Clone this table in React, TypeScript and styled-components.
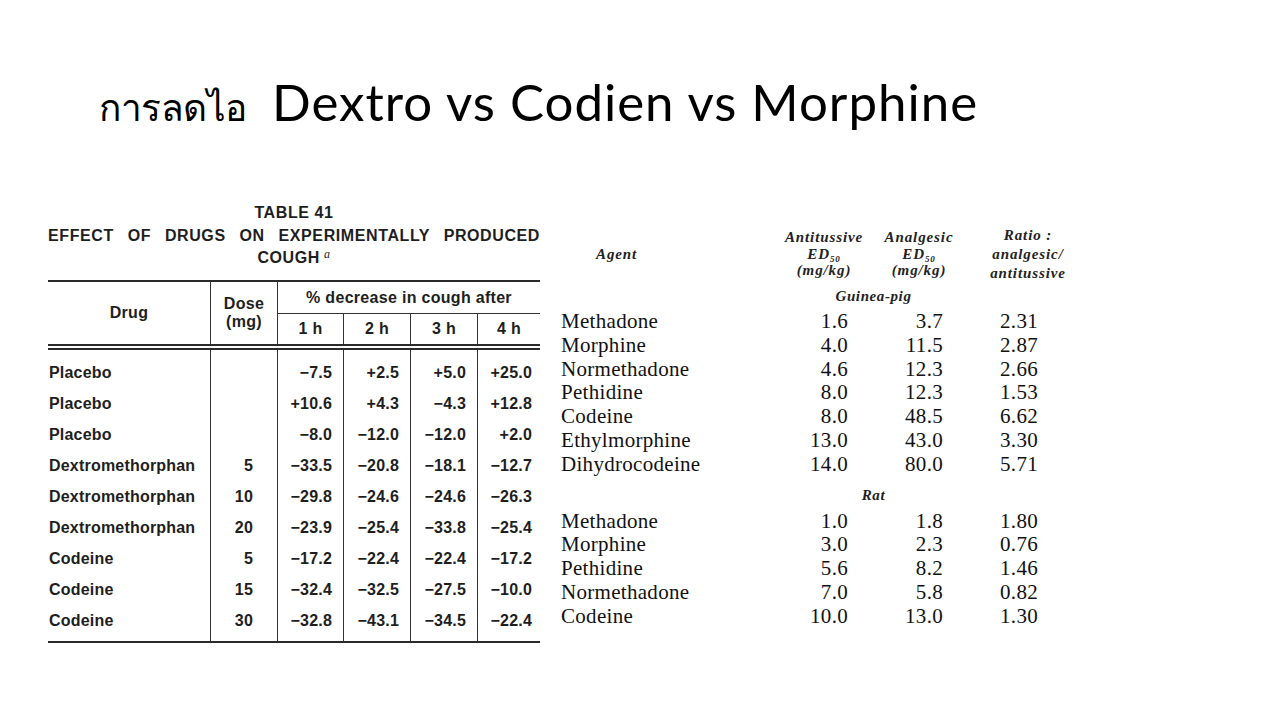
import React from "react";
import styled, { createGlobalStyle } from "styled-components";

const Global = createGlobalStyle`
  html, body { margin: 0; padding: 0; background: #fff; }
  #root { width: 1280px; height: 720px; }
`;

const Slide = styled.div`
  width: 1280px;
  height: 720px;
  background: #ffffff;
  overflow: hidden;
  box-sizing: border-box;
`;

const Title = styled.h1`
  margin: 0;
  padding: 72px 0 0 99px;
  height: 60px;
  line-height: 60px;
  display: flex;
  align-items: baseline;
  font-family: Lato, "Noto Sans", sans-serif;
  font-weight: 400;
  font-size: 51px;
  letter-spacing: 1px;
  color: #000;
  white-space: pre;
`;

const ThaiPart = styled.span`
  display: inline-block;
  width: 173px;
  font-size: 37px;
  letter-spacing: -0.5px;
`;

const Content = styled.div`
  display: flex;
  align-items: flex-start;
  margin-top: 69px;
  padding-left: 48px;
`;

/* ---------- Left (scanned) table ---------- */

const LeftBlock = styled.div`
  width: 492px;
  font-family: "Liberation Sans", Arial, sans-serif;
  font-weight: 700;
  color: #1e1e1e;
`;

const CaptionLine = styled.div<{ $h: number; $justify?: boolean }>`
  height: ${(p) => p.$h}px;
  line-height: ${(p) => p.$h}px;
  font-size: 16px;
  letter-spacing: 0.6px;
  text-align: ${(p) => (p.$justify ? "justify" : "center")};
  text-align-last: ${(p) => (p.$justify ? "justify" : "center")};
`;

const Sup = styled.sup`
  font-family: "Liberation Serif", serif;
  font-style: italic;
  font-weight: 400;
  font-size: 12px;
  margin-left: 4px;
  vertical-align: 5px;
  line-height: 0;
`;

const Rule = styled.div<{ $mt?: number }>`
  height: 2px;
  background: #2a2a2a;
  margin-top: ${(p) => p.$mt ?? 0}px;
`;

const COLS = "162px 67px 66px 67px 67px 63px";

const HeadGrid = styled.div`
  display: grid;
  grid-template-columns: ${COLS};
  grid-template-rows: 32px 30px;
  font-size: 16px;
  letter-spacing: 0.3px;
`;

const HeadCell = styled.div<{
  $row: string;
  $col: string;
  $divider?: boolean;
  $under?: boolean;
}>`
  grid-row: ${(p) => p.$row};
  grid-column: ${(p) => p.$col};
  display: flex;
  flex-direction: column;
  align-items: center;
  justify-content: center;
  line-height: 18px;
  border-left: ${(p) => (p.$divider ? "1.5px solid #333" : "none")};
  border-bottom: ${(p) => (p.$under ? "1.5px solid #333" : "none")};
  box-sizing: border-box;
`;

const DoubleRule = styled.div`
  height: 2px;
  border-top: 2px solid #2a2a2a;
  border-bottom: 2px solid #2a2a2a;
`;

const BodyGrid = styled.div`
  display: grid;
  grid-template-columns: ${COLS};
  font-size: 16px;
  letter-spacing: 0.2px;
`;

const BodyCol = styled.div<{ $divider?: boolean; $align: string; $pad: number }>`
  display: flex;
  flex-direction: column;
  padding: 7px ${(p) => p.$pad}px 5px ${(p) => (p.$align === "left" ? 1 : 0)}px;
  text-align: ${(p) => p.$align};
  border-left: ${(p) => (p.$divider ? "1.5px solid #333" : "none")};
  box-sizing: border-box;
`;

const BodyCell = styled.div`
  height: 31px;
  line-height: 31px;
  white-space: nowrap;
`;

/* ---------- Right (serif) table ---------- */

const RightBlock = styled.div`
  margin-left: 21px;
  margin-top: 28px;
  width: 530px;
  font-family: "Liberation Serif", "Times New Roman", serif;
  color: #111;
`;

const RCOLS = "215px 96px 94px 124px";

const RGrid = styled.div`
  display: grid;
  grid-template-columns: ${RCOLS};
`;

const RHead = styled.div<{ $align: string; $pad?: number; $lh?: number }>`
  font-style: italic;
  font-weight: 700;
  font-size: 15px;
  letter-spacing: 0.9px;
  line-height: ${(p) => p.$lh ?? 16.5}px;
  text-align: ${(p) => p.$align};
  padding-left: ${(p) => p.$pad ?? 0}px;
  display: flex;
  flex-direction: column;
  justify-content: center;
  align-items: ${(p) => (p.$align === "center" ? "center" : "flex-start")};
  height: 50px;
  color: #222;
`;

const Sub = styled.sub`
  font-size: 9px;
  vertical-align: -3px;
  line-height: 0;
`;

const SectionLabel = styled.div<{ $mt: number; $mb: number }>`
  grid-column: 1 / -1;
  padding-left: 96px;
  height: 24px;
  line-height: 24px;
  text-align: center;
  font-style: italic;
  font-weight: 700;
  font-size: 15px;
  letter-spacing: 0.6px;
  color: #222;
  margin: ${(p) => p.$mt}px 0 ${(p) => p.$mb}px;
`;

const RCell = styled.div<{ $align: string; $pad: number }>`
  height: 23.8px;
  line-height: 23.8px;
  font-size: 21px;
  letter-spacing: 0.3px;
  text-align: ${(p) => p.$align};
  padding-right: ${(p) => p.$pad}px;
  white-space: nowrap;
`;

type LRow = [string, string, string, string, string, string];

const leftRows: LRow[] = [
  ["Placebo", "", "\u22127.5", "+2.5", "+5.0", "+25.0"],
  ["Placebo", "", "+10.6", "+4.3", "\u22124.3", "+12.8"],
  ["Placebo", "", "\u22128.0", "\u221212.0", "\u221212.0", "+2.0"],
  ["Dextromethorphan", "5", "\u221233.5", "\u221220.8", "\u221218.1", "\u221212.7"],
  ["Dextromethorphan", "10", "\u221229.8", "\u221224.6", "\u221224.6", "\u221226.3"],
  ["Dextromethorphan", "20", "\u221223.9", "\u221225.4", "\u221233.8", "\u221225.4"],
  ["Codeine", "5", "\u221217.2", "\u221222.4", "\u221222.4", "\u221217.2"],
  ["Codeine", "15", "\u221232.4", "\u221232.5", "\u221227.5", "\u221210.0"],
  ["Codeine", "30", "\u221232.8", "\u221243.1", "\u221234.5", "\u221222.4"],
];

const leftColSpec = [
  { align: "left", pad: 0, divider: false },
  { align: "right", pad: 24, divider: true },
  { align: "right", pad: 11, divider: true },
  { align: "right", pad: 11, divider: true },
  { align: "right", pad: 11, divider: true },
  { align: "right", pad: 8, divider: true },
];

type RRow = [string, string, string, string];

const guineaPig: RRow[] = [
  ["Methadone", "1.6", "3.7", "2.31"],
  ["Morphine", "4.0", "11.5", "2.87"],
  ["Normethadone", "4.6", "12.3", "2.66"],
  ["Pethidine", "8.0", "12.3", "1.53"],
  ["Codeine", "8.0", "48.5", "6.62"],
  ["Ethylmorphine", "13.0", "43.0", "3.30"],
  ["Dihydrocodeine", "14.0", "80.0", "5.71"],
];

const rat: RRow[] = [
  ["Methadone", "1.0", "1.8", "1.80"],
  ["Morphine", "3.0", "2.3", "0.76"],
  ["Pethidine", "5.6", "8.2", "1.46"],
  ["Normethadone", "7.0", "5.8", "0.82"],
  ["Codeine", "10.0", "13.0", "1.30"],
];

const rColSpec = [
  { align: "left", pad: 0 },
  { align: "right", pad: 24 },
  { align: "right", pad: 23 },
  { align: "right", pad: 52 },
];

const RRows: React.FC<{ rows: RRow[] }> = ({ rows }) => (
  <>
    {rows.map((r, i) =>
      r.map((v, j) => (
        <RCell key={`${i}-${j}`} $align={rColSpec[j].align} $pad={rColSpec[j].pad}>
          {v}
        </RCell>
      ))
    )}
  </>
);

export default function App() {
  return (
    <Slide>
      <Global />
      <Title>
        <ThaiPart>การลดไอ</ThaiPart>
        <span>Dextro vs Codien vs Morphine</span>
      </Title>
      <Content>
        <LeftBlock>
          <CaptionLine $h={24}>TABLE 41</CaptionLine>
          <CaptionLine $h={22} $justify>
            EFFECT OF DRUGS ON EXPERIMENTALLY PRODUCED
          </CaptionLine>
          <CaptionLine $h={22}>
            COUGH<Sup>a</Sup>
          </CaptionLine>
          <Rule $mt={11} />
          <HeadGrid>
            <HeadCell $row="1 / 3" $col="1">Drug</HeadCell>
            <HeadCell $row="1 / 3" $col="2" $divider>
              <span>Dose</span>
              <span>(mg)</span>
            </HeadCell>
            <HeadCell $row="1" $col="3 / 7" $divider $under>
              % decrease in cough after
            </HeadCell>
            {["1 h", "2 h", "3 h", "4 h"].map((h, i) => (
              <HeadCell key={h} $row="2" $col={`${i + 3}`} $divider>
                {h}
              </HeadCell>
            ))}
          </HeadGrid>
          <DoubleRule />
          <BodyGrid>
            {leftColSpec.map((c, j) => (
              <BodyCol key={j} $divider={c.divider} $align={c.align} $pad={c.pad}>
                {leftRows.map((r, i) => (
                  <BodyCell key={i}>{r[j] || "\u00a0"}</BodyCell>
                ))}
              </BodyCol>
            ))}
          </BodyGrid>
          <Rule />
        </LeftBlock>

        <RightBlock>
          <RGrid>
            <RHead $align="left" $pad={35}>Agent</RHead>
            <RHead $align="center">
              <span>Antitussive</span>
              <span>
                ED<Sub>50</Sub>
              </span>
              <span>(mg/kg)</span>
            </RHead>
            <RHead $align="center">
              <span>Analgesic</span>
              <span>
                ED<Sub>50</Sub>
              </span>
              <span>(mg/kg)</span>
            </RHead>
            <RHead $align="center" $lh={19}>
              <span>Ratio :</span>
              <span>analgesic/</span>
              <span>antitussive</span>
            </RHead>
            <SectionLabel $mt={5} $mb={2}>Guinea-pig</SectionLabel>
            <RRows rows={guineaPig} />
            <SectionLabel $mt={6} $mb={3}>Rat</SectionLabel>
            <RRows rows={rat} />
          </RGrid>
        </RightBlock>
      </Content>
    </Slide>
  );
}
